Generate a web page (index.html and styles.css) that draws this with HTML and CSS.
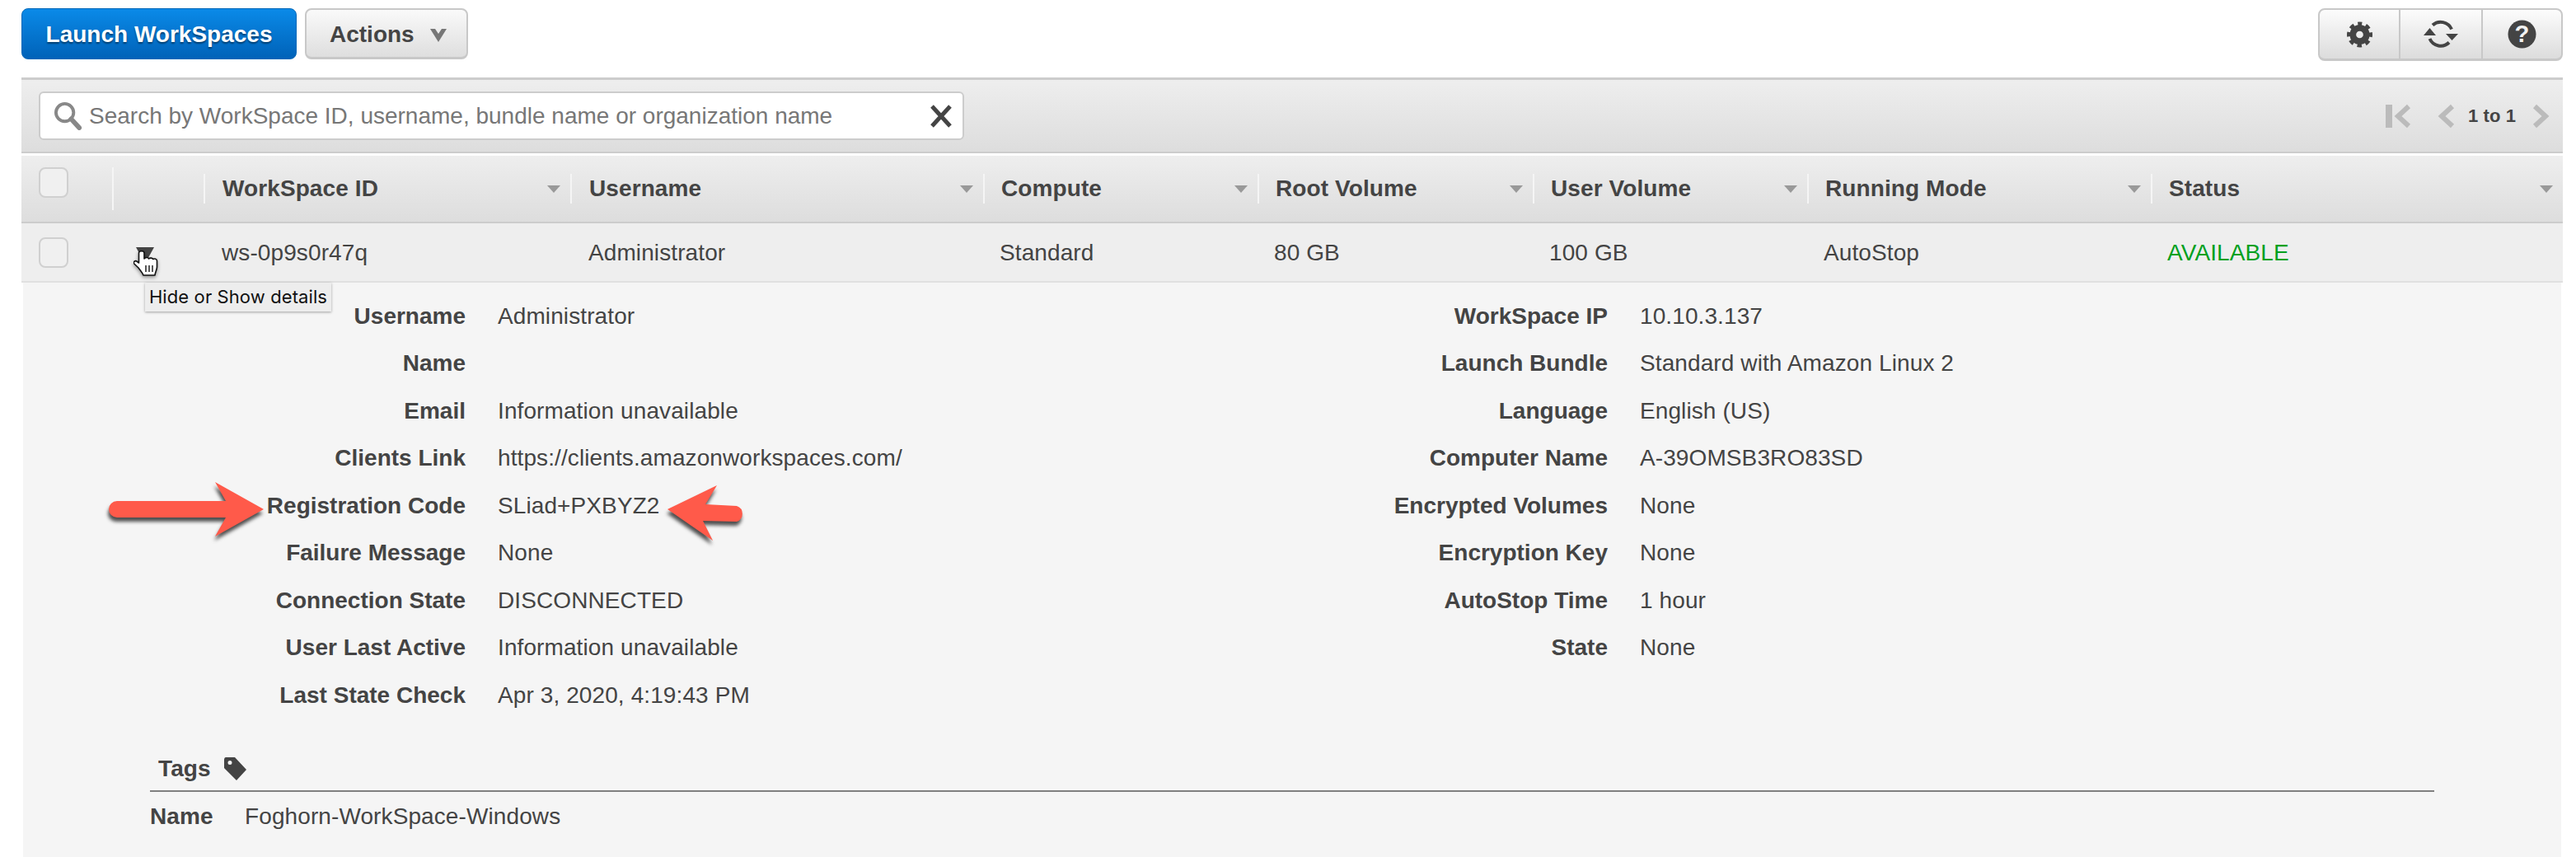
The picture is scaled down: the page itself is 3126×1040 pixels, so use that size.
FILE: index.html
```html
<!DOCTYPE html>
<html lang="en">
<head>
  <meta charset="UTF-8" />
  <title>WorkSpaces</title>
  <link rel="stylesheet" href="styles.css">
</head>
<body>
<div class="page">

  <div class="top-bar">
    <button class="btn btn-primary" type="button">Launch WorkSpaces</button>
    <button class="btn btn-actions" type="button">Actions
      <svg class="caret" viewBox="0 0 20 16" width="20" height="16"><path d="M0 0 L10 16 L20 0 L14 0 L10 6 L6 0 Z" fill="#777"/></svg>
    </button>
    <div class="icon-group">
      <div class="icon-btn icon-gear">
        <svg viewBox="0 0 32 32" width="31" height="32"><circle cx="16" cy="16" r="8.500" fill="none" stroke="#444" stroke-width="8"/><circle cx="16" cy="16" r="13.500" fill="none" stroke="#444" stroke-width="5" stroke-dasharray="5.600 5" stroke-dashoffset="2.800" transform="rotate(-90 16 16)"/></svg>
      </div>
      <div class="icon-btn icon-refresh">
        <svg viewBox="0 0 42 37" width="42" height="37"><g fill="none" stroke="#444" stroke-width="4"><path d="M11 7.500 A14.500 14.500 0 0 1 34 12.500"/><path d="M31 28.500 A14.500 14.500 0 0 1 7.500 24"/></g><path fill="#444" d="M27 18 L42 18 L34.500 26 Z M0 20 L15 20 L7.500 11 Z"/></svg>
      </div>
      <div class="icon-btn icon-help">
        <svg viewBox="0 0 36 36" width="35" height="35"><circle cx="18" cy="18" r="17.500" fill="#444"/><text x="18" y="28" text-anchor="middle" class="help-mark">?</text></svg>
      </div>
    </div>
  </div>

  <div class="filter-bar">
    <div class="search-box">
      <svg class="search-icon" viewBox="0 0 36 36" width="35" height="35"><circle cx="14" cy="14" r="11" fill="#fff" stroke="#888" stroke-width="4"/><path d="M22 22 L32 33" stroke="#888" stroke-width="6" stroke-linecap="round"/></svg>
      <span class="search-text">Search by WorkSpace ID, username, bundle name or organization name</span>
      <svg class="clear-icon" viewBox="0 0 28 28" width="28" height="28"><path d="M3 2 L25 26 M25 2 L3 26" stroke="#444" stroke-width="5"/></svg>
    </div>
    <div class="pager">
      <svg viewBox="0 0 32 30" width="32" height="30"><path fill="#bbb" d="M0 1h8v28H0z"/><path fill="none" stroke="#bbb" stroke-width="6" d="M28 3 L15 15 L28 27"/></svg>
      <svg class="pager-prev" viewBox="0 0 22 30" width="22" height="30"><path fill="none" stroke="#bbb" stroke-width="6" d="M19 3 L6 15 L19 27"/></svg>
      <span class="pager-text">1 to 1</span>
      <svg class="pager-next" viewBox="0 0 22 30" width="22" height="30"><path fill="none" stroke="#bbb" stroke-width="6" d="M3 3 L16 15 L3 27"/></svg>
    </div>
  </div>

  <div class="table-grid table-head">
    <div class="cell-check"><span class="checkbox"></span></div>
    <div class="cell-expand"></div>
    <div class="head-cell head-wide"><b>WorkSpace ID</b><i class="sort"></i></div>
    <div class="head-cell head-wide"><b>Username</b><i class="sort"></i></div>
    <div class="head-cell"><b>Compute</b><i class="sort"></i></div>
    <div class="head-cell"><b>Root Volume</b><i class="sort"></i></div>
    <div class="head-cell"><b>User Volume</b><i class="sort"></i></div>
    <div class="head-cell"><b>Running Mode</b><i class="sort"></i></div>
    <div class="head-cell"><b>Status</b><i class="sort"></i></div>
  </div>

  <div class="table-grid table-row">
    <div class="cell-check"><span class="checkbox"></span></div>
    <div class="cell-toggle">
      <i class="toggle-arrow"></i>
      <svg class="hand" viewBox="0 0 30 31" width="30" height="31"><path fill="#fff" stroke="#111" stroke-width="1.600" stroke-linejoin="round" d="M6.500 3c0-3 6.500-3 6.500 0v7c2-2 5-2 5.500 0 1.500-1.500 5-1 5 .5 2-1 5-.5 5 2V20c0 3-2 6-2.500 10H12c-1-3-4-6-6-9L.8 16c-1.500-2 1-4 3-3l2.700 2z"/><path stroke="#111" stroke-width="1.400" d="M15 18v8M19 18v8M23 18v8"/></svg>
      <div class="tooltip">Hide or Show details</div>
    </div>
    <div class="row-cell row-wide">ws-0p9s0r47q</div>
    <div class="row-cell row-wide">Administrator</div>
    <div class="row-cell">Standard</div>
    <div class="row-cell">80 GB</div>
    <div class="row-cell">100 GB</div>
    <div class="row-cell">AutoStop</div>
    <div class="row-cell status-ok">AVAILABLE</div>
  </div>

  <div class="details">
    <div class="detail-grid">
      <b>Username</b><span>Administrator</span><b>WorkSpace IP</b><span>10.10.3.137</span>
      <b>Name</b><span></span><b>Launch Bundle</b><span>Standard with Amazon Linux 2</span>
      <b>Email</b><span>Information unavailable</span><b>Language</b><span>English (US)</span>
      <b>Clients Link</b><span>https://clients.amazonworkspaces.com/</span><b>Computer Name</b><span>A-39OMSB3RO83SD</span>
      <b>Registration Code</b><span>SLiad+PXBYZ2</span><b>Encrypted Volumes</b><span>None</span>
      <b>Failure Message</b><span>None</span><b>Encryption Key</b><span>None</span>
      <b>Connection State</b><span>DISCONNECTED</span><b>AutoStop Time</b><span>1 hour</span>
      <b>User Last Active</b><span>Information unavailable</span><b>State</b><span>None</span>
      <b>Last State Check</b><span>Apr 3, 2020, 4:19:43 PM</span><b></b><span></span>
    </div>

    <div class="tags">
      <div class="tags-title">
        <b>Tags</b>
        <svg viewBox="0 0 28 28" width="28" height="28"><path fill="#444" fill-rule="evenodd" d="M2 0h11l14 15-12 13L0 13V3c0-2 1-3 2-3z M7 4a2.500 2.500 0 1 0 0 5a2.500 2.500 0 0 0 0-5z"/></svg>
      </div>
      <div class="tag-row"><b>Name</b><span>Foghorn-WorkSpace-Windows</span></div>
    </div>
  </div>

  <svg class="callout callout-left" viewBox="0 0 190 68" width="190" height="68"><path fill="#ff5a4a" d="M129 0 L188 33 L129 66 L142 43 L10 43 A10 10 0 0 1 10 23 L142 23 Z"/></svg>
  <svg class="callout callout-right" viewBox="0 0 96 68" width="96" height="68"><path fill="#ff5a4a" d="M0 29 L60 0 L46 23 L84 25 A10 10 0 0 1 84 44 L43 43 L55 67 Z"/></svg>
</div>
</body>
</html>
```

FILE: styles.css
```css
* {
  box-sizing: border-box;
}

body {
  margin: 0;
  background: #fff;
  font-family: "Liberation Sans", Arial, sans-serif;
  font-size: 28px;
  letter-spacing: 0.1px;
  color: #444;
}

.page {
  position: relative;
  width: 3126px;
  height: 1040px;
  overflow: hidden;
  padding: 10px 16px 0 26px;
}

/* top buttons */
.top-bar {
  display: flex;
  gap: 10px;
  height: 63px;
  margin-bottom: 21px;
}

.btn {
  height: 62px;
  padding-top: 3px;
  border-radius: 8px;
  font-family: inherit;
  font-size: 28px;
  font-weight: bold;
}

.btn-primary {
  width: 334px;
  padding-left: 0;
  padding-right: 0;
  color: #fff;
  border: 1px solid #0066b8;
  background: linear-gradient(#0a8ae8, #0062b8);
  text-shadow: 0 2px 2px rgba(0,0,0,0.45);
}

.btn-actions {
  width: 198px;
  color: #444;
  border: 2px solid #c8c8c8;
  border-bottom-width: 3px;
  background: linear-gradient(#fafafa, #dedede);
  text-align: left;
  padding-left: 28px;
}

.caret {
  margin-left: 12px;
}

.icon-group {
  display: flex;
  margin-left: auto;
  height: 64px;
  border: 2px solid #c8c8c8;
  border-bottom-width: 3px;
  border-radius: 8px;
  background: linear-gradient(#fcfcfc, #dcdcdc);
}

.icon-btn {
  display: flex;
  align-items: center;
  justify-content: center;
}

.icon-gear {
  width: 96px;
}

.icon-refresh {
  width: 102px;
  border-left: 2px solid #c8c8c8;
  border-right: 2px solid #c8c8c8;
}

.icon-help {
  width: 95px;
}

.help-mark {
  font-family: "Liberation Sans", Arial, sans-serif;
  font-size: 30px;
  font-weight: bold;
  fill: #f2f2f2;
}

/* search and pager */
.filter-bar {
  display: flex;
  align-items: center;
  justify-content: space-between;
  height: 92px;
  padding: 0 15px 0 21px;
  border-top: 3px solid #ccc;
  border-bottom: 2px solid #ccc;
  background: linear-gradient(#eee, #ddd);
}

.search-box {
  display: flex;
  align-items: center;
  width: 1123px;
  height: 59px;
  padding: 0 12px 0 16px;
  border: 2px solid #ccc;
  border-radius: 6px;
  background: #fff;
}

.search-text {
  flex: 1;
  margin-left: 8px;
  letter-spacing: 0;
  color: #777;
}

.pager {
  display: flex;
  align-items: center;
}

.pager-prev {
  margin-left: 30px;
}

.pager-text {
  margin: 0 20px 0 16px;
  font-size: 22px;
  font-weight: bold;
}

/* table */
.table-grid {
  display: grid;
  grid-template-columns: 110px 111px 445px 501px 333px 334px 333px 417px 500px;
  background: #eee;
}

.table-head {
  height: 82px;
  margin-top: 3px;
  border-bottom: 2px solid #ccc;
  background: linear-gradient(#eee, #ddd);
}

.cell-check {
  padding: 14px 0 0 21px;
}

.table-row .cell-check {
  padding-top: 17px;
}

.checkbox {
  display: block;
  width: 36px;
  height: 37px;
  border: 2px solid #d0d0d0;
  border-radius: 8px;
  background: #f0f0f0;
}

.cell-expand {
  height: 52px;
  margin-top: 14px;
  border-left: 2px solid #f5f5f5;
}

.head-cell {
  display: flex;
  align-items: center;
  justify-content: space-between;
  height: 36px;
  margin-top: 22px;
  padding: 0 12px 0 20px;
  border-left: 2px solid #f5f5f5;
}

.head-wide {
  padding-left: 21px;
}

.sort {
  width: 0;
  height: 0;
  border-left: 8px solid transparent;
  border-right: 8px solid transparent;
  border-top: 9px solid #999;
}

.table-row {
  height: 72px;
  border-bottom: 2px solid #e0e0e0;
}

.cell-toggle {
  position: relative;
}

.toggle-arrow {
  position: absolute;
  left: 29px;
  top: 29px;
  width: 0;
  height: 0;
  border-left: 11px solid transparent;
  border-right: 11px solid transparent;
  border-top: 20px solid #444;
}

.hand {
  position: absolute;
  left: 26px;
  top: 33px;
  filter: drop-shadow(0 2px 2px rgba(0,0,0,0.4));
}

.tooltip {
  position: absolute;
  z-index: 2;
  left: 40px;
  top: 72px;
  width: 226px;
  height: 35px;
  line-height: 35px;
  text-align: center;
  font-family: Inter, "Liberation Sans", sans-serif;
  font-size: 22px;
  color: #111;
  background: #ededed;
  box-shadow: 0 1px 3px rgba(0,0,0,0.35);
}

.row-cell {
  padding: 20px 0 0 20px;
}

.row-wide {
  padding-left: 22px;
}

.status-ok {
  color: #00a01e;
}

/* details panel */
.details {
  height: 698px;
  margin: 0 2px;
  padding-top: 12px;
  background: #f5f5f5;
}

.detail-grid {
  display: grid;
  grid-template-columns: 537px 786px 522px 1fr;
  grid-auto-rows: 57.5px;
  column-gap: 39px;
  align-items: center;
}

.detail-grid b {
  text-align: right;
  letter-spacing: 0;
}

.tags {
  width: 2772px;
  margin-left: 154px;
}

.tags-title {
  display: flex;
  align-items: center;
  gap: 16px;
  height: 88px;
  padding: 46px 0 12px 10px;
  border-bottom: 2px solid #808080;
}

.tag-row {
  display: flex;
  align-items: center;
  height: 60px;
}

.tag-row b {
  width: 115px;
}

/* red arrows over the page */
.callout {
  position: absolute;
  filter: drop-shadow(-1px 5px 2px rgba(60,60,60,0.9));
}

.callout-left {
  left: 132px;
  top: 585px;
}

.callout-right {
  left: 810px;
  top: 589px;
}
```
